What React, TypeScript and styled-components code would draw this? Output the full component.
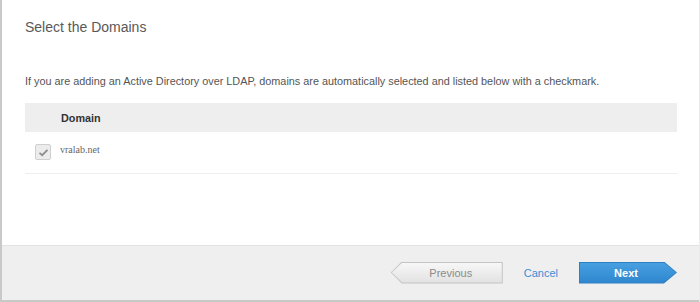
import React from "react";
import styled, { createGlobalStyle } from "styled-components";

const Global = createGlobalStyle`
  html, body { margin: 0; padding: 0; background: #fff; }
  body { font-family: "Liberation Sans", Arial, sans-serif; }
`;

const Wizard = styled.div`
  width: 700px;
  height: 302px;
  box-sizing: border-box;
  display: flex;
  flex-direction: column;
  border-left: 2px solid #c9c9c9;
  border-right: 1px solid #ebebeb;
  background: #fff;
`;

const Body = styled.div`
  flex: 1;
  padding: 19px 22px 0 23px;
  display: flex;
  flex-direction: column;
`;

const Title = styled.h2`
  margin: 0;
  font-size: 14px;
  line-height: 16px;
  font-weight: normal;
  color: #595959;
`;

const Description = styled.p`
  margin: 40px 0 0;
  font-size: 10.85px;
  line-height: 13px;
  color: #555;
`;

const Table = styled.div`
  margin-top: 15px;
  display: grid;
  grid-template-columns: 34px 1fr;
`;

const HeaderCell = styled.div<{ $pad?: number }>`
  height: 29px;
  background: #eeeeee;
  display: flex;
  align-items: center;
  padding-left: ${(p) => p.$pad ?? 0}px;
  font-size: 10.8px;
  font-weight: bold;
  color: #333;
`;

const RowCell = styled.div<{ $pad?: number }>`
  height: 42px;
  border-bottom: 1px solid #eeeeee;
  display: flex;
  align-items: flex-start;
  padding-left: ${(p) => p.$pad ?? 0}px;
  padding-top: 12px;
  box-sizing: border-box;
`;

const Checkbox = styled.span`
  width: 16px;
  height: 16px;
  box-sizing: border-box;
  border: 1px solid #cfcfcf;
  border-radius: 2px;
  background: #ececec;
  display: flex;
  align-items: center;
  justify-content: center;
`;

const DomainName = styled.span`
  font-family: "Liberation Serif", "Times New Roman", serif;
  font-size: 10px;
  line-height: 12px;
  padding-left: 1px;
  color: #666;
`;

const Footer = styled.div`
  height: 57px;
  box-sizing: border-box;
  background: #efefef;
  border-top: 1px solid #e2e2e2;
  border-bottom: 2px solid #c8c8c8;
  display: flex;
  align-items: center;
  justify-content: flex-end;
  padding-right: 22px;
  padding-bottom: 1px;
`;

const ArrowOuter = styled.button<{ $dir: "left" | "right"; $w: number; $primary?: boolean }>`
  all: unset;
  box-sizing: border-box;
  width: ${(p) => p.$w}px;
  height: 22px;
  padding: 1px;
  cursor: pointer;
  display: flex;
  background: ${(p) => (p.$primary ? "#2d7fc4" : "#c4c4c4")};
  clip-path: ${(p) =>
    p.$dir === "left"
      ? "polygon(11px 0, 100% 0, 100% 100%, 11px 100%, 0 50%)"
      : "polygon(0 0, calc(100% - 13px) 0, 100% 50%, calc(100% - 13px) 100%, 0 100%)"};
`;

const ArrowInner = styled.span<{ $dir: "left" | "right"; $primary?: boolean; $shift: number }>`
  flex: 1;
  display: flex;
  align-items: center;
  justify-content: center;
  padding-left: ${(p) => (p.$shift > 0 ? p.$shift : 0)}px;
  padding-right: ${(p) => (p.$shift < 0 ? -p.$shift : 0)}px;
  font-family: "Liberation Sans", Arial, sans-serif;
  font-size: 11px;
  font-weight: ${(p) => (p.$primary ? "bold" : "normal")};
  color: ${(p) => (p.$primary ? "#fff" : "#8a8a8a")};
  background: ${(p) =>
    p.$primary
      ? "linear-gradient(#47a0e0, #2f86cf)"
      : "linear-gradient(#f7f7f7, #e2e2e2)"};
  clip-path: ${(p) =>
    p.$dir === "left"
      ? "polygon(10.5px 0, 100% 0, 100% 100%, 10.5px 100%, 0 50%)"
      : "polygon(0 0, calc(100% - 12.5px) 0, 100% 50%, calc(100% - 12.5px) 100%, 0 100%)"};
`;

const CancelLink = styled.a`
  font-size: 11px;
  color: #3b8ed4;
  text-decoration: none;
  margin: 0 21px 0 21px;
  cursor: pointer;
`;

export default function App() {
  return (
    <>
      <Global />
      <Wizard>
        <Body>
          <Title>Select the Domains</Title>
          <Description>
            If you are adding an Active Directory over LDAP, domains are automatically selected and
            listed below with a checkmark.
          </Description>
          <Table>
            <HeaderCell />
            <HeaderCell $pad={2}>Domain</HeaderCell>
            <RowCell $pad={10}>
              <Checkbox>
                <svg width="11" height="9" viewBox="0 0 11 9">
                  <path d="M1.5 4.8 L4.2 7.2 L9.5 1.8" fill="none" stroke="#8d8d8d" strokeWidth="1.8" />
                </svg>
              </Checkbox>
            </RowCell>
            <RowCell>
              <DomainName>vralab.net</DomainName>
            </RowCell>
          </Table>
        </Body>
        <Footer>
          <ArrowOuter $dir="left" $w={112}>
            <ArrowInner $dir="left" $shift={8}>Previous</ArrowInner>
          </ArrowOuter>
          <CancelLink>Cancel</CancelLink>
          <ArrowOuter $dir="right" $w={98} $primary>
            <ArrowInner $dir="right" $primary $shift={-4}>Next</ArrowInner>
          </ArrowOuter>
        </Footer>
      </Wizard>
    </>
  );
}
